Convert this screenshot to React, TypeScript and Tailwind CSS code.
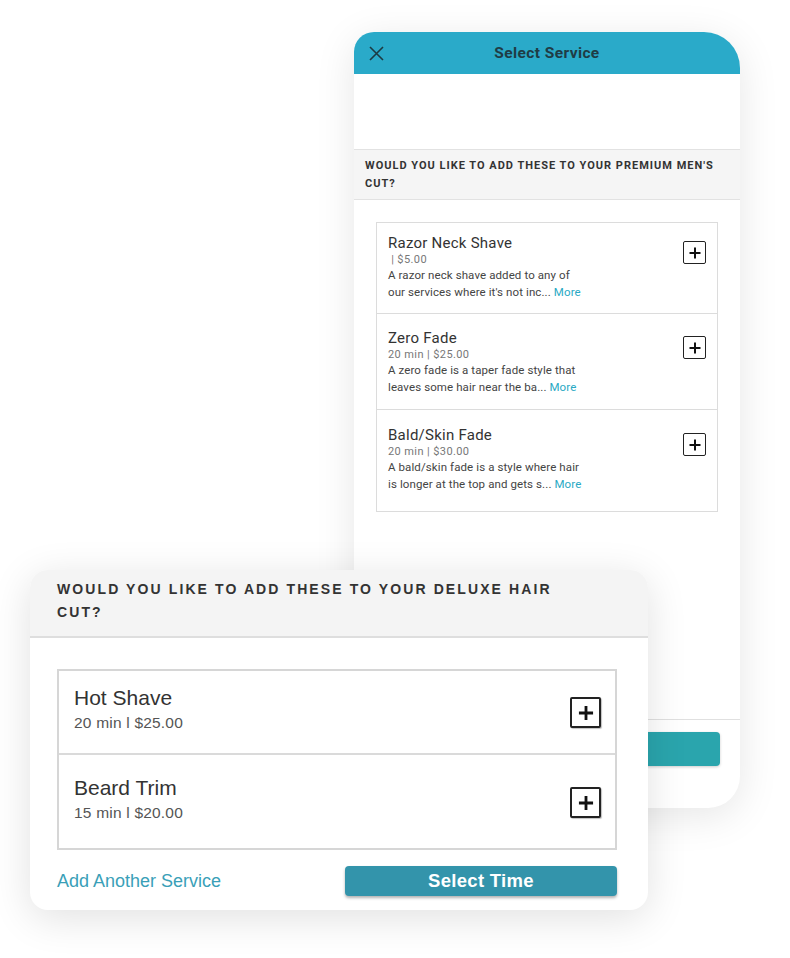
import React from "react";

const roboto = { fontFamily: "Roboto, 'Noto Sans', sans-serif" };
const arial = { fontFamily: "'Liberation Sans', Arial, sans-serif" };

function PlusBox({ size, stroke }: { size: "sm" | "lg"; stroke?: number }) {
  const cls =
    size === "sm"
      ? "w-[23px] h-[23px] border-[1.5px] rounded-[2px]"
      : "w-[31px] h-[31px] border-[2px] rounded-[2px] shadow-[1px_1px_1px_rgba(0,0,0,0.25)]";
  const s = size === "sm" ? 14 : 18;
  return (
    <div className={`${cls} border-[#222] bg-white flex items-center justify-center shrink-0`}>
      <svg width={s} height={s} viewBox="0 0 14 14">
        <path d="M7 1.5v11M1.5 7h11" stroke="#111" strokeWidth={stroke ?? 2} />
      </svg>
    </div>
  );
}

type PItem = { title: string; sub: string; d1: string; d2: string; pad: string };

const phoneItems: PItem[] = [
  {
    title: "Razor Neck Shave",
    sub: "\u00a0| $5.00",
    d1: "A razor neck shave added to any of",
    d2: "our services where it's not inc...",
    pad: "pt-[11px] pb-[12px]",
  },
  {
    title: "Zero Fade",
    sub: "20 min | $25.00",
    d1: "A zero fade is a taper fade style that",
    d2: "leaves some hair near the ba...",
    pad: "pt-[15px] pb-[13px]",
  },
  {
    title: "Bald/Skin Fade",
    sub: "20 min | $30.00",
    d1: "A bald/skin fade is a style where hair",
    d2: "is longer at the top and gets s...",
    pad: "pt-[16px] pb-[18px]",
  },
];

function Phone() {
  return (
    <div
      className="absolute left-[354px] top-[32px] w-[386px] h-[776px] bg-white rounded-tl-[20px] rounded-tr-[36px] rounded-br-[32px] rounded-bl-[20px] shadow-[0_8px_40px_rgba(0,0,0,0.10)] flex flex-col overflow-hidden"
      style={roboto}
    >
      <div className="h-[42px] bg-[#2aaac9] relative flex items-center justify-center shrink-0">
        <svg className="absolute left-[15px] top-[14px]" width="15" height="15" viewBox="0 0 15 15">
          <path d="M1 1l13 13M14 1L1 14" stroke="#1d3a42" strokeWidth="1.6" />
        </svg>
        <span className="text-[15.5px] font-bold text-[#1f3c45] tracking-[0.4px] pt-[2px]">Select Service</span>
      </div>
      <div className="h-[75px] shrink-0" />
      <div className="bg-[#f5f5f5] border-y border-[#e2e2e2] px-[11px] pt-[7px] pb-[6px] shrink-0">
        <p className="text-[11px] leading-[18px] font-bold tracking-[1px] text-[#333]">
          WOULD YOU LIKE TO ADD THESE TO YOUR PREMIUM MEN'S CUT?
        </p>
      </div>
      <div className="mx-[22px] mt-[22px] border border-[#dcdcdc] flex flex-col shrink-0">
        {phoneItems.map((it, i) => (
          <div
            key={it.title}
            className={`flex justify-between pl-[11px] pr-[11px] ${it.pad} ${i > 0 ? "border-t border-[#dcdcdc]" : ""}`}
          >
            <div className="flex flex-col">
              <span className="text-[15px] leading-[18px] text-[#333] tracking-[0.25px]">{it.title}</span>
              <span className="text-[11px] leading-[15px] text-[#777] tracking-[0.4px]">{it.sub}</span>
              <span className="text-[11.5px] leading-[17px] text-[#444] tracking-[0.1px]">{it.d1}</span>
              <span className="text-[11.5px] leading-[17px] text-[#444] tracking-[0.1px]">
                {it.d2} <span className="text-[#2aa9c4]">More</span>
              </span>
            </div>
            <div className="pt-[7px]">
              <PlusBox size="sm" />
            </div>
          </div>
        ))}
      </div>
      <div className="flex-1" />
      <div className="border-t border-[#e0e0e0] h-[89px] shrink-0 px-[20px] pt-[12px]">
        <div className="h-[34px] rounded-[4px] bg-[#2aa5ad] shadow-[0_1px_3px_rgba(0,0,0,0.2)]" />
      </div>
    </div>
  );
}

const cardItems = [
  { title: "Hot Shave", sub: "20 min l $25.00", pad: "pt-[15px] pb-[17px]", plus: "pt-[11px]" },
  { title: "Beard Trim", sub: "15 min l $20.00", pad: "pt-[21px] pb-[22px]", plus: "pt-[11px]" },
];

function Card() {
  return (
    <div
      className="absolute left-[30px] top-[570px] w-[618px] h-[340px] bg-white rounded-[18px] shadow-[0_8px_40px_rgba(0,0,0,0.12)] flex flex-col overflow-hidden"
      style={arial}
    >
      <div className="h-[68px] bg-[#f4f4f4] border-b-2 border-[#dedede] px-[27px] pt-[8px] shrink-0">
        <p className="text-[14px] leading-[23px] font-bold tracking-[2.1px] text-[#333]">
          WOULD YOU LIKE TO ADD THESE TO YOUR DELUXE HAIR
          <br />
          CUT?
        </p>
      </div>
      <div className="ml-[27px] mr-[31px] mt-[31px] border-2 border-[#d6d6d6] flex flex-col shrink-0">
        {cardItems.map((it, i) => (
          <div
            key={it.title}
            className={`flex justify-between pl-[15px] pr-[14px] ${it.pad} ${i > 0 ? "border-t-2 border-[#dadada]" : ""}`}
          >
            <div className="flex flex-col">
              <span className="text-[21px] leading-[24px] text-[#333]">{it.title}</span>
              <span className="text-[15.5px] leading-[26px] text-[#555] tracking-[0.2px]">{it.sub}</span>
            </div>
            <div className={it.plus}>
              <PlusBox size="lg" stroke={2.2} />
            </div>
          </div>
        ))}
      </div>
      <div className="flex items-center justify-between ml-[27px] mr-[31px] mt-[16px]">
        <span className="text-[18px] text-[#3a9fb8]">Add Another Service</span>
        <button
          className="w-[272px] h-[30px] rounded-[4px] bg-[#3394ab] text-white text-[18.5px] font-bold tracking-[0.3px] shadow-[0_2px_3px_rgba(0,0,0,0.3)] flex items-center justify-center"
          style={arial}
        >
          Select Time
        </button>
      </div>
    </div>
  );
}

export default function App() {
  return (
    <div className="relative w-[790px] h-[958px] bg-white overflow-hidden">
      <Phone />
      <Card />
    </div>
  );
}
